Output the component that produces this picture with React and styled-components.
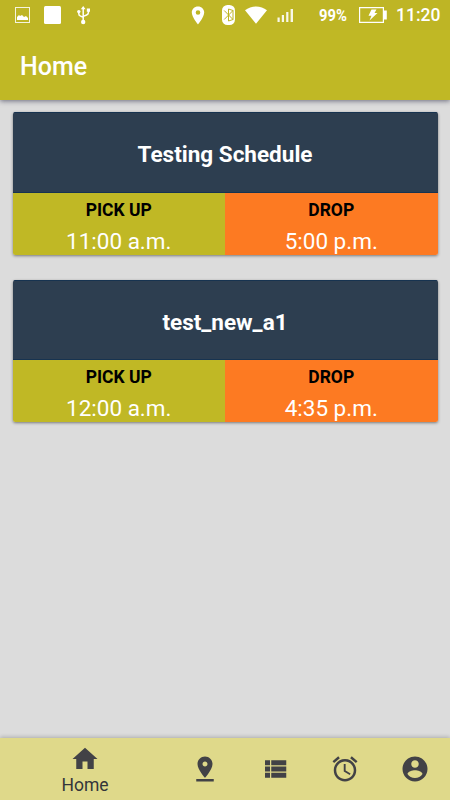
import React from "react";
import styled, { createGlobalStyle } from "styled-components";

const GlobalStyle = createGlobalStyle`
  * { box-sizing: border-box; }
  body { margin: 0; background: #dcdcdc; font-family: Roboto, sans-serif; }
`;

const Screen = styled.div`
  width: 450px;
  height: 800px;
  display: flex;
  flex-direction: column;
  overflow: hidden;
  background: #dcdcdc;
`;

const Header = styled.header`
  flex: none;
  height: 100px;
  background: #c0b825;
  color: #fff;
  box-shadow: 0 1px 5px rgba(30, 30, 60, 0.6);
`;

const StatusBar = styled.div`
  height: 30px;
  display: flex;
  align-items: center;
  justify-content: space-between;
  padding: 0 9px 0 15px;
  background: #beb525;
`;

const StatusGroup = styled.div`
  display: flex;
  align-items: center;
`;

const StatusIcon = styled.svg`
  display: block;
  flex: none;
  width: ${(p) => p.$w}px;
  height: ${(p) => p.$h}px;
  margin-left: ${(p) => p.$gap || 0}px;
  fill: #fff;
`;

const Percent = styled.span`
  width: 29px;
  margin-left: 25px;
  font-size: 17px;
  font-weight: 700;
  line-height: 32px;
  white-space: nowrap;
`;

const PercentText = styled.span`
  display: inline-block;
  transform: scaleX(0.87);
  transform-origin: left;
`;

const Clock = styled.span`
  width: 45px;
  margin-left: 9px;
  font-size: 17.5px;
  font-weight: 500;
  line-height: 32px;
  white-space: nowrap;
`;

const Title = styled.h1`
  margin: 0;
  padding: 2px 20px 0;
  font-size: 25px;
  font-weight: 500;
  line-height: 70px;
`;

const Content = styled.main`
  flex: 1;
  display: flex;
  flex-direction: column;
  gap: 25px;
  padding: 12.4px 12.5px;
`;

const Card = styled.section`
  height: 142.5px;
  border-radius: 2.5px;
  overflow: hidden;
  box-shadow: 0 1px 3px rgba(0, 0, 0, 0.45);
`;

const CardTitle = styled.h2`
  margin: 0;
  height: 80.5px;
  background: #2d3e50;
  border: solid #173350;
  border-width: 1px 0;
  color: #fff;
  font-size: 22.5px;
  font-weight: 700;
  line-height: 82px;
  text-align: center;
`;

const Times = styled.div`
  display: grid;
  grid-template-columns: 1fr 1fr;
  height: 62px;
`;

const TimeCell = styled.div`
  padding-top: 7px;
  background: ${(p) => p.$color};
  text-align: center;
`;

const Label = styled.div`
  color: #000;
  font-size: 17.5px;
  font-weight: 700;
  line-height: 21px;
`;

const Time = styled.div`
  margin-top: 7px;
  color: #fff;
  font-size: 22.5px;
  line-height: 26px;
`;

const BottomNav = styled.nav`
  flex: none;
  height: 62px;
  display: grid;
  grid-template-columns: 170px repeat(4, 70px);
  background: #dfd98a;
  box-shadow: 0 -1px 4px rgba(0, 0, 0, 0.22);
`;

const NavItem = styled.a`
  display: flex;
  flex-direction: column;
  align-items: center;
  padding-top: ${(p) => (p.$active ? 5.5 : 15.5)}px;
  color: #424242;
`;

const NavIcon = styled.svg`
  display: block;
  width: 30px;
  height: 30px;
  flex: none;
  fill: #424246;
`;

const NavLabel = styled.span`
  margin-top: 1px;
  font-size: 17.5px;
  line-height: 21px;
  color: #33353a;
`;

const schedules = [
  { name: "Testing Schedule", pickUp: "11:00 a.m.", drop: "5:00 p.m." },
  { name: "test_new_a1", pickUp: "12:00 a.m.", drop: "4:35 p.m." },
];

const navItems = [
  { id: "home", label: "Home", d: "M10 20v-6h4v6h5v-8h3L12 3 2 12h3v8z" },
  {
    id: "stops",
    d: "M18 8c0-3.31-2.69-6-6-6S6 4.69 6 8c0 4.5 6 11 6 11s6-6.5 6-11zm-8 0c0-1.1.9-2 2-2s2 .9 2 2-.89 2-2 2c-1.1 0-2-.9-2-2zM5 20v2h14v-2H5z",
  },
  {
    id: "list",
    d: "M4 14h4v-4H4v4zm0 5h4v-4H4v4zM4 9h4V5H4v4zm5 5h12v-4H9v4zm0 5h12v-4H9v4zM9 5v4h12V5H9z",
  },
  {
    id: "alarm",
    d: "M22 5.72l-4.6-3.86-1.29 1.53 4.6 3.86L22 5.72zM7.88 3.39L6.6 1.86 2 5.71l1.29 1.53 4.59-3.85zM12.5 8H11v6l4.75 2.85.75-1.23-4-2.37V8zM12 4c-4.97 0-9 4.03-9 9s4.02 9 9 9c4.97 0 9-4.03 9-9s-4.03-9-9-9zm0 16c-3.87 0-7-3.13-7-7s3.13-7 7-7 7 3.13 7 7-3.13 7-7 7z",
  },
  {
    id: "account",
    d: "M12 2C6.48 2 2 6.48 2 12s4.48 10 10 10 10-4.48 10-10S17.52 2 12 2zm0 3c1.66 0 3 1.34 3 3s-1.34 3-3 3-3-1.34-3-3 1.34-3 3-3zm0 14.2c-2.5 0-4.71-1.28-6-3.22.03-1.99 4-3.08 6-3.08 1.99 0 5.97 1.09 6 3.08-1.29 1.94-3.5 3.22-6 3.22z",
  },
];

function StatusIcons() {
  return (
    <StatusBar>
      <StatusGroup>
        <StatusIcon $w={15} $h={16} viewBox="0 0 15 16">
          <path d="M0 0h15v16H0zM1 1v14h13V1z" fillRule="evenodd" opacity="0.85" />
          <path d="M2 13V10l2-2 1 1 2-1 2 2 2-1 2 2v2z" />
        </StatusIcon>
        <StatusIcon $w={17} $h={18} $gap={14} viewBox="0 0 17 18">
          <rect width="17" height="18" rx="1.5" />
        </StatusIcon>
        <StatusIcon $w={14} $h={20} $gap={16} viewBox="0 0 14 20">
          <path
            d="M6.2 3v13M1.8 6.5v2.2q0 1.8 1.8 2.4l2.6 1.2M11.4 5v2.5q0 1.8-1.8 2.5l-3.4 1.4"
            fill="none"
            stroke="#fff"
            strokeWidth="1.5"
          />
          <path d="M6.2 1l2.4 3.2H3.8zM9.8 3.5h3.2v3.2H9.8z" />
          <circle cx="1.8" cy="6.6" r="1.7" />
          <circle cx="6.2" cy="17" r="2.2" />
        </StatusIcon>
      </StatusGroup>
      <StatusGroup>
        <StatusIcon $w={14} $h={19} viewBox="0 0 14 19">
          <path
            d="M7 .5C3.4.5.8 3.1.8 6.6.8 11.2 7 18.5 7 18.5s6.2-7.3 6.2-11.9C13.2 3.1 10.6.5 7 .5zM7 4.2a2.3 2.3 0 1 1 0 4.6 2.3 2.3 0 0 1 0-4.6z"
            fillRule="evenodd"
          />
        </StatusIcon>
        <StatusIcon $w={13} $h={20} $gap={17} viewBox="0 0 13 20">
          <rect width="13" height="20" rx="5.5" />
          <path
            d="M2.2 5.5L11 14.500 6.500 16V4L11 5.500 2.200 14.500M11 5.500v9"
            fill="none"
            stroke="#beb525"
            strokeWidth="1"
          />
        </StatusIcon>
        <StatusIcon $w={22} $h={18} $gap={10} viewBox="0 0 22 18">
          <path d="M0 4.2Q4.800.4 11 .4T22 4.200L11 17.800z" />
        </StatusIcon>
        <StatusIcon $w={17} $h={13} $gap={10} viewBox="0 0 17 13">
          <path
            d="M.5 8.500h2.200V13H.5zM4.800 6h2.200v7H4.800zM9.200 3h2.200v10H9.200zM13.600 0h2.400v13h-2.400z"
            opacity="0.9"
          />
        </StatusIcon>
        <Percent><PercentText>99%</PercentText></Percent>
        <StatusIcon $w={28} $h={16} $gap={11} viewBox="0 0 28 16">
          <path d="M0 0h25v3.5h2.800v9H25V16H0zM1.200 1.200v13.600h22.600V1.200z" fillRule="evenodd" />
          <path d="M12.5 2.500h5L15.500 6h3l-8 7.500 2-4.800h-3z" />
        </StatusIcon>
        <Clock>11:20</Clock>
      </StatusGroup>
    </StatusBar>
  );
}

function ScheduleCard({ schedule }) {
  return (
    <Card>
      <CardTitle>{schedule.name}</CardTitle>
      <Times>
        <TimeCell $color="#c0b825">
          <Label>PICK UP</Label>
          <Time>{schedule.pickUp}</Time>
        </TimeCell>
        <TimeCell $color="#fd7a22">
          <Label>DROP</Label>
          <Time>{schedule.drop}</Time>
        </TimeCell>
      </Times>
    </Card>
  );
}

export default function App() {
  return (
    <>
      <GlobalStyle />
      <Screen>
        <Header>
          <StatusIcons />
          <Title>Home</Title>
        </Header>
        <Content>
          {schedules.map((s) => (
            <ScheduleCard key={s.name} schedule={s} />
          ))}
        </Content>
        <BottomNav>
          {navItems.map((item) => (
            <NavItem key={item.id} $active={Boolean(item.label)}>
              <NavIcon viewBox="0 0 24 24">
                <path d={item.d} />
              </NavIcon>
              {item.label && <NavLabel>{item.label}</NavLabel>}
            </NavItem>
          ))}
        </BottomNav>
      </Screen>
    </>
  );
}
